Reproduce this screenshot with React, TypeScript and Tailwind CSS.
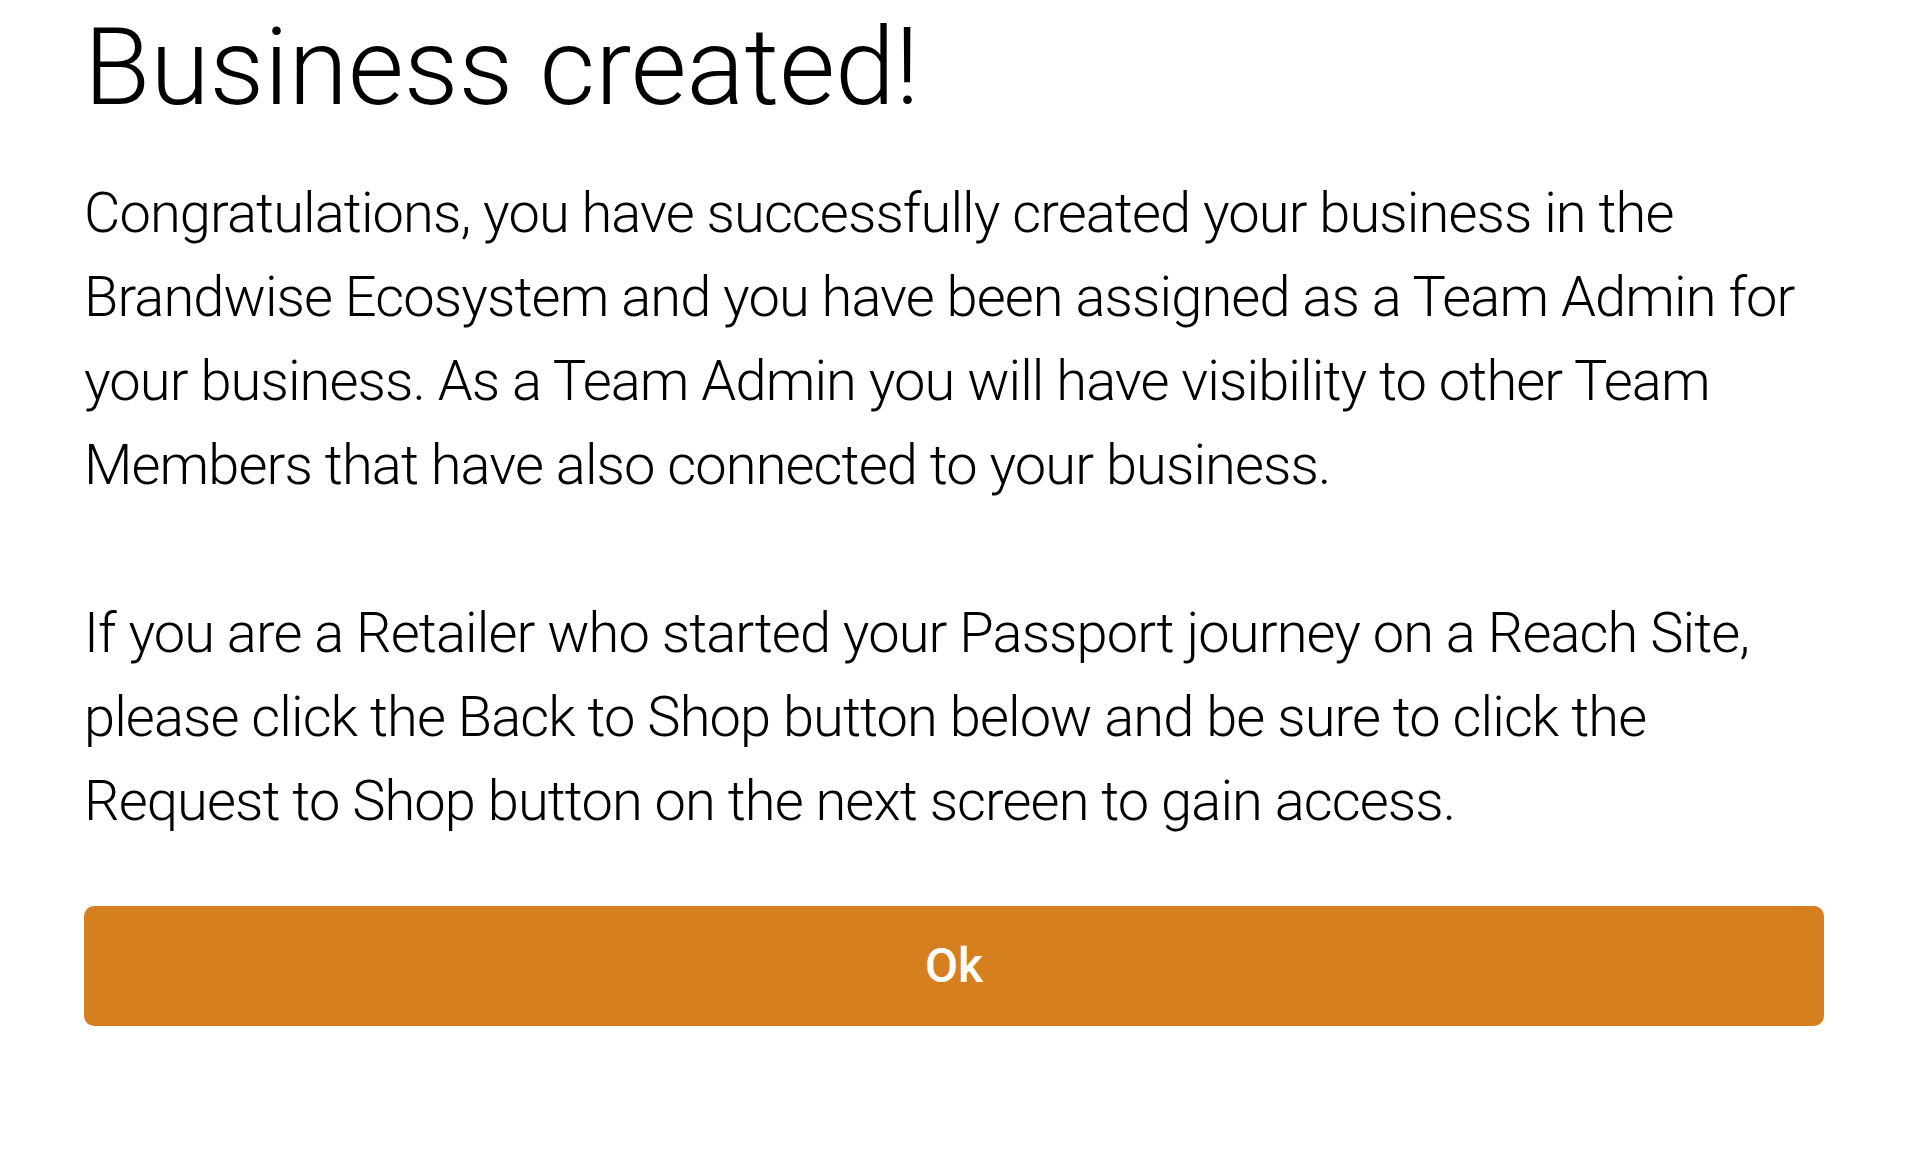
export default function App() {
  return (
    <div className="min-h-screen bg-white pl-[84px] pr-[87px] font-['Roboto',sans-serif] text-black">
      <h1 className="pt-[4px] text-[108px] font-light leading-[126px]">Business created!</h1>
      <div className="mt-[41px] text-[56px] font-light leading-[84px] tracking-[-0.9px]">
        <p>
          Congratulations, you have successfully created your business in the Brandwise Ecosystem and you
          have been assigned as a Team Admin for your business. As a Team Admin you will have visibility to
          other Team Members that have also connected to your business.
        </p>
        <br />
        <p>
          If you are a Retailer who started your Passport journey on a Reach Site, please click the Back to
          Shop button below and be sure to click the Request to Shop button on the next screen to gain
          access.
        </p>
      </div>
      <button className="mt-[63px] flex h-[120px] w-full items-center justify-center rounded-[10px] bg-[#d67f1f] text-[48px] font-medium text-white">
        Ok
      </button>
    </div>
  );
}
